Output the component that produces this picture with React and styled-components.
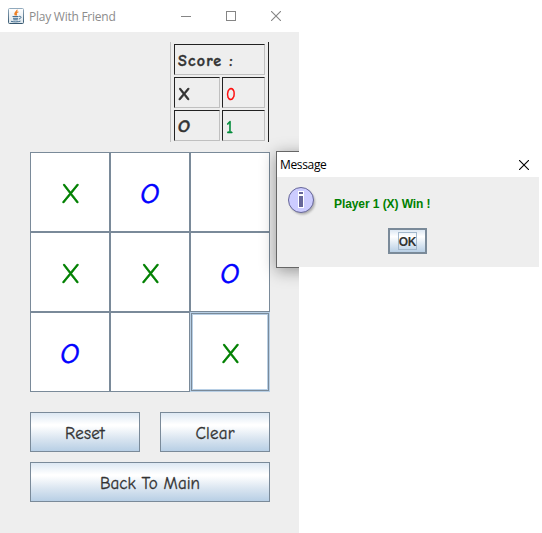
import React from "react";
import styled, { createGlobalStyle } from "styled-components";

const GlobalStyle = createGlobalStyle`
  * { box-sizing: border-box; }
  body { margin: 0; background: #fff; overflow: hidden; }
`;

const comic = `"Comic Sans MS", "Comic Neue", Lato, sans-serif`;
const system = `"Segoe UI", "Open Sans", sans-serif`;

const Screen = styled.main`
  position: relative;
  width: 542px;
  height: 533px;
  overflow: hidden;
`;

const Window = styled.section`
  position: relative;
  width: 299px;
  height: 533px;
  background: #eee;
  overflow: hidden;
`;

const TitleBar = styled.header`
  display: flex;
  align-items: center;
  height: 32px;
  padding: 0 18px 0 8px;
  background: #fff;
`;

const Title = styled.h1`
  margin: 0 auto 0 5px;
  padding-top: 2px;
  font: 400 12px/16px ${system};
  letter-spacing: -0.25px;
  color: #8c8c8c;
`;

const Controls = styled.div`
  display: flex;
  gap: 35px;
`;

const Body = styled.div`
  display: flex;
  flex-direction: column;
  padding: 10px 29px 0 30px;
`;

const Score = styled.div`
  align-self: flex-end;
  display: grid;
  grid-template-columns: 46px 43px;
  grid-template-rows: 31px 31px 31px;
  gap: 2px;
  width: 99px;
  height: 100px;
  margin-right: 1px;
  padding: 2px 0 0 3px;
  border-left: 1px solid #c0c0c0;
  border-right: 1px solid #222;
`;

const ScoreCell = styled.div`
  grid-column: ${(p) => (p.$wide ? "span 2" : "auto")};
  display: flex;
  align-items: center;
  padding: 2px 0 0 3px;
  border: 1px solid;
  border-color: #222 #c0c0c0 #c0c0c0 #222;
  font: ${(p) => (p.$bold ? 700 : 400)} 16px/20px ${comic};
  letter-spacing: ${(p) => (p.$wide ? "1.2px" : 0)};
  color: ${(p) => p.$color || "#333"};
  -webkit-text-stroke: 0.4px currentColor;
`;

const Mark = styled.span`
  display: inline-block;
  transform: skewX(${(p) => (p.$round ? "-7deg" : "0deg")})
    scale(${(p) => p.$sx || 1}, ${(p) => p.$sy || 1});
  transform-origin: ${(p) => p.$origin || "center"};
`;

const Board = styled.div`
  display: grid;
  grid-template: repeat(3, 80px) / repeat(3, 80px);
  margin-top: 10px;
`;

const Square = styled.button`
  display: flex;
  align-items: center;
  justify-content: center;
  padding: 4px 0 0 1px;
  border: 1px solid ${(p) => (p.$focused ? "#b8cfe5" : "#7a8a99")};
  box-shadow: ${(p) =>
    p.$focused ? "inset 0 0 0 1px #7a8a99, inset 0 0 0 2px #b8cfe5" : "none"};
  background: #fff;
  font: 400 28px/36px ${comic};
  color: ${(p) => (p.$mark === "X" ? "#008000" : "#00f")};
  -webkit-text-stroke: 0.5px currentColor;
`;

const Actions = styled.div`
  display: grid;
  grid-template-columns: 110px 110px;
  gap: 10px 20px;
  margin-top: 20px;
`;

const Action = styled.button`
  grid-column: ${(p) => (p.$wide ? "span 2" : "auto")};
  height: 40px;
  padding: 3px 0 0;
  border: 1px solid #7a8a99;
  background: linear-gradient(#dde8f3, #fff 30%, #fff 34%, #dbe6f1 66%, #b8cfe5);
  font: 400 17px/20px ${comic};
  letter-spacing: ${(p) => (p.$wide ? "0.03px" : "0.2px")};
  color: #333;
  -webkit-text-stroke: 0.3px currentColor;
`;

const DialogShadow = styled.div`
  position: absolute;
  left: 276px;
  top: 151px;
  width: 270px;
  height: 117px;
  border: 1px solid #666;
  box-shadow: 0 3px 15px rgba(0, 0, 0, 0.38);
`;

const Dialog = styled.section`
  position: absolute;
  left: 277px;
  top: 152px;
  width: 262px;
  height: 115px;
  background: #eee;
`;

const DialogBar = styled.header`
  display: flex;
  align-items: center;
  justify-content: space-between;
  height: 25px;
  padding: 0 10px 0 3px;
  background: #fff;
  font: 400 12px/16px ${system};
  letter-spacing: -0.35px;
  color: #000;
`;

const DialogContent = styled.div`
  display: flex;
  align-items: flex-start;
  height: 51px;
  padding: 8px 0 0 10px;
`;

const Message = styled.p`
  margin: 11px 0 0 15px;
  font: 700 12px/16px "Liberation Sans", Arial, sans-serif;
  letter-spacing: -0.08px;
  color: #008000;
`;

const OkButton = styled.button`
  display: flex;
  align-items: center;
  justify-content: center;
  width: 39px;
  height: 26px;
  margin-left: 111px;
  padding: 0;
  border: 2px solid #7a8a99;
  background: linear-gradient(#dde8f3, #fff 30%, #b8cfe5);
`;

const FocusLabel = styled.span`
  display: flex;
  justify-content: center;
  width: 19px;
  height: 18px;
  border: 1px solid #a3b8cc;
  font: 700 12px/18px "Liberation Sans", Arial, sans-serif;
  letter-spacing: -0.3px;
  color: #333;
`;

const JavaIcon = () => (
  <svg width="16" height="16" viewBox="0 0 16 16" fill="none">
    <defs>
      <linearGradient id="frame" x2="0" y2="1">
        <stop stopColor="#91aabd" />
        <stop offset="1" stopColor="#36576f" />
      </linearGradient>
      <linearGradient id="face" x2="0" y2="1">
        <stop stopColor="#fff" />
        <stop offset="1" stopColor="#dce5eb" />
      </linearGradient>
    </defs>
    <rect x=".5" y=".5" width="15" height="15" rx="1" fill="url(#face)" stroke="url(#frame)" />
    <path d="M9 1.7C9.7 3.7 5.2 4.4 7.4 7.5M10.4 3.8C8 4.8 7.7 5.5 8.7 7.4" stroke="#ee7d20" strokeWidth="1.2" />
    <path d="M4.5 8.5h6M5 10.3h5M5.3 11.8h4.5M3 13.3c2.5.8 7 .8 9.5-.2M11 8.4c3-.5 2.6 2-.2 2.6" stroke="#456f91" />
  </svg>
);

const MinimizeIcon = () => (
  <svg width="10" height="10"><path d="M0 5.5h10" stroke="#858585" /></svg>
);
const MaximizeIcon = () => (
  <svg width="10" height="10"><rect x=".5" y=".5" width="9" height="9" fill="none" stroke="#858585" /></svg>
);
const CloseIcon = ({ color = "#858585" }) => (
  <svg width="10" height="10"><path d="M0 0L10 10M10 0L0 10" stroke={color} strokeWidth="1.1" /></svg>
);

const InfoIcon = () => (
  <svg width="32" height="32" viewBox="0 0 32 32">
    <defs>
      <filter id="soft" x="-30%" y="-30%" width="160%" height="160%">
        <feGaussianBlur stdDeviation="1.2" />
      </filter>
    </defs>
    <circle cx="15.5" cy="17" r="12.5" fill="#777" opacity=".55" filter="url(#soft)" />
    <circle cx="14" cy="15" r="12.5" fill="#ccf" stroke="#669" />
    <path d="M11 6h6v17h-6z" fill="#fff" />
    <path d="M12 7h4v2h-4zM12 11h4v11h-4z" fill="#669" />
  </svg>
);

const squares = ["X", "O", "", "X", "X", "O", "O", "", "X"];

export default function App() {
  return (
    <Screen>
      <GlobalStyle />
      <Window>
        <TitleBar>
          <JavaIcon />
          <Title>Play With Friend</Title>
          <Controls>
            <MinimizeIcon />
            <MaximizeIcon />
            <CloseIcon />
          </Controls>
        </TitleBar>
        <Body>
          <Score>
            <ScoreCell $wide $bold>Score :</ScoreCell>
            <ScoreCell $bold><Mark $sx={1.1} $sy={1.1} $origin="left center">X</Mark></ScoreCell>
            <ScoreCell $color="#f00"><Mark $sy={1.1} $origin="left center">0</Mark></ScoreCell>
            <ScoreCell $bold><Mark $round $sx={1.2} $sy={1.08} $origin="left center">O</Mark></ScoreCell>
            <ScoreCell $color="#008b3a"><Mark $sx={1.15} $sy={1.1} $origin="left center">1</Mark></ScoreCell>
          </Score>
          <Board>
            {squares.map((mark, i) => (
              <Square key={i} $mark={mark} $focused={i === 8}>
                <Mark $round={mark === "O"} $sx={mark === "O" ? 1.08 : 0.97}>{mark}</Mark>
              </Square>
            ))}
          </Board>
          <Actions>
            <Action>Reset</Action>
            <Action>Clear</Action>
            <Action $wide>Back To Main</Action>
          </Actions>
        </Body>
        <DialogShadow />
      </Window>
      <Dialog>
        <DialogBar>
          Message
          <CloseIcon color="#000" />
        </DialogBar>
        <DialogContent>
          <InfoIcon />
          <Message>Player 1 (X) Win !</Message>
        </DialogContent>
        <OkButton><FocusLabel>OK</FocusLabel></OkButton>
      </Dialog>
    </Screen>
  );
}
